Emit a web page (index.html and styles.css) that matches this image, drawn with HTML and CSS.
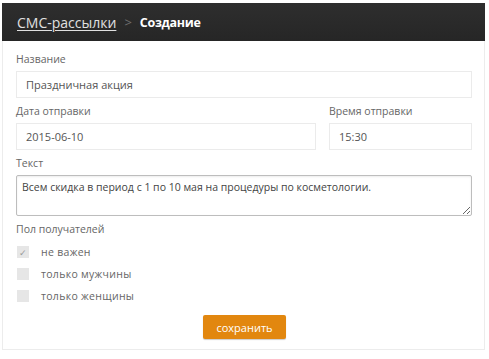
FILE: index.html
```html
<!DOCTYPE html>
<html lang="ru">
<head>
    <meta charset="UTF-8">
    <meta name="viewport" content="width=device-width, initial-scale=1.0">
    <title>СМС-рассылки — Создание</title>
    <link rel="stylesheet" href="styles.css">
</head>
<body>
    <div class="panel">
        <div class="panel-header">
            <a href="#" class="crumb">СМС-рассылки</a>
            <span class="crumb-sep">&gt;</span>
            <span class="crumb-current">Создание</span>
        </div>
        <form class="panel-body">
            <div class="field">
                <label>Название</label>
                <input type="text" value="Праздничная акция">
            </div>
            <div class="row">
                <div class="field field-date">
                    <label>Дата отправки</label>
                    <input type="text" value="2015-06-10">
                </div>
                <div class="field field-time">
                    <label>Время отправки</label>
                    <input type="text" value="15:30">
                </div>
            </div>
            <div class="field">
                <label>Текст</label>
                <textarea>Всем скидка в период с 1 по 10 мая на процедуры по косметологии.</textarea>
            </div>
            <div class="field">
                <label>Пол получателей</label>
                <div class="option"><span class="check checked">&#10003;</span>не важен</div>
                <div class="option"><span class="check"></span>только мужчины</div>
                <div class="option"><span class="check"></span>только женщины</div>
            </div>
            <div class="actions">
                <button type="button" class="save-btn">сохранить</button>
            </div>
        </form>
    </div>
</body>
</html>
```

FILE: styles.css
```css
body {
    margin: 0;
    background: #fff;
    font-family: "Open Sans", "Liberation Sans", sans-serif;
    font-size: 11px;
    color: #666;
}
.panel {
    margin: 3px 4px 0 2px;
    border: 1px solid #ececec;
    border-top: none;
    height: 347px;
    box-sizing: border-box;
}
.panel-header {
    height: 38px;
    margin: 0 -1px;
    background: linear-gradient(#2e2e2e, #262626);
    display: flex;
    align-items: center;
    padding: 0 15px;
    font-size: 14px;
    color: #fff;
}
.crumb {
    color: #e0e0e0;
    text-decoration: underline;
    text-underline-offset: 2px;
}
.crumb-sep {
    color: #6f6f6f;
    margin: 0 8px 0 8px;
    font-size: 13px;
}
.crumb-current {
    font-weight: bold;
    font-size: 12.5px;
    letter-spacing: -0.3px;
}
.panel-body {
    padding: 11px 12px 0 13px;
}
.field {
    margin-bottom: 6px;
}
.field label {
    display: block;
    margin-bottom: 4px;
    line-height: 15px;
    font-size: 10.5px;
}
.field input, .field textarea {
    display: block;
    box-sizing: border-box;
    width: 100%;
    height: 27px;
    border: 1px solid #ebebeb;
    padding: 0 9px;
    font-family: inherit;
    font-size: 11px;
    color: #555;
    background: #fff;
}
.field textarea {
    height: 41px;
    padding: 4px 5px;
    border: 1px solid #bdbdbd;
    border-radius: 2px;
    box-shadow: inset 0 1px 2px rgba(0,0,0,0.08);
    resize: vertical;
    color: #444;
    font-size: 10.5px;
}
.row {
    display: flex;
    gap: 13px;
}
.field-date {
    width: 300px;
}
.field-time {
    flex: 1;
}
.option {
    display: flex;
    align-items: center;
    height: 22px;
    padding-left: 1px;
    font-size: 10.5px;
    letter-spacing: 0.3px;
}
.check {
    width: 12px;
    height: 12px;
    background: #e6e6e6;
    margin-right: 12px;
    font-size: 9px;
    color: #999;
    display: flex;
    align-items: center;
    justify-content: center;
}
.actions {
    display: flex;
    justify-content: center;
    margin-top: 8px;
    padding-left: 1px;
}
.save-btn {
    background: #e2870f;
    color: #fff;
    border: none;
    border-radius: 2px;
    width: 83px;
    height: 24px;
    font-family: inherit;
    font-size: 11px;
    box-shadow: 0 1px 1px rgba(0,0,0,0.2);
    cursor: pointer;
}
```
